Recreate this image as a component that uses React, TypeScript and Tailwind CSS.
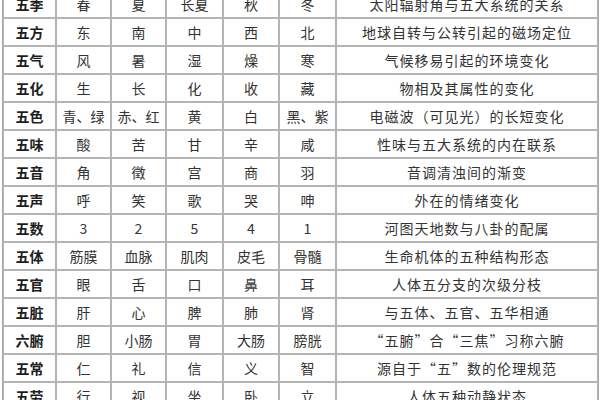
const rows: [string, string[], string][] = [
  ['五季', ['春', '夏', '长夏', '秋', '冬'], '太阳辐射角与五大系统的关系'],
  ['五方', ['东', '南', '中', '西', '北'], '地球自转与公转引起的磁场定位'],
  ['五气', ['风', '暑', '湿', '燥', '寒'], '气候移易引起的环境变化'],
  ['五化', ['生', '长', '化', '收', '藏'], '物相及其属性的变化'],
  ['五色', ['青、绿', '赤、红', '黄', '白', '黑、紫'], '电磁波（可见光）的长短变化'],
  ['五味', ['酸', '苦', '甘', '辛', '咸'], '性味与五大系统的内在联系'],
  ['五音', ['角', '徵', '宫', '商', '羽'], '音调清浊间的渐变'],
  ['五声', ['呼', '笑', '歌', '哭', '呻'], '外在的情绪变化'],
  ['五数', ['3', '2', '5', '4', '1'], '河图天地数与八卦的配属'],
  ['五体', ['筋膜', '血脉', '肌肉', '皮毛', '骨髓'], '生命机体的五种结构形态'],
  ['五官', ['眼', '舌', '口', '鼻', '耳'], '人体五分支的次级分枝'],
  ['五脏', ['肝', '心', '脾', '肺', '肾'], '与五体、五官、五华相通'],
  ['六腑', ['胆', '小肠', '胃', '大肠', '膀胱'], '“五腑”合“三焦”习称六腑'],
  ['五常', ['仁', '礼', '信', '义', '智'], '源自于“五”数的伦理规范'],
  ['五劳', ['行', '视', '坐', '卧', '立'], '人体五种动静状态'],
]

const colWidths = ['w-[53px]', 'w-[55px]', 'w-[55px]', 'w-[57px]', 'w-[56px]', 'w-[57px]', 'w-[262px]']

const App = () => {
  return (
    <div className="h-[400px] w-[600px] overflow-hidden bg-white">
      <table
        className="-mt-[11px] ml-[2px] w-[596px] table-fixed border-separate border-spacing-0 border border-[#a8a8a8] text-[14px] text-[#333333]"
        style={{ fontFamily: '"Noto Sans CJK SC", "Noto Sans", sans-serif' }}
      >
        <colgroup>
          {colWidths.map((w, i) => (
            <col key={i} className={w} />
          ))}
        </colgroup>
        <tbody>
          {rows.map(([name, items, desc]) => (
            <tr key={name} className="h-[28px]">
              <td className="border border-[#b4b4b4] p-0 text-center font-bold text-[#1e1e1e]">{name}</td>
              {items.map((it, i) => (
                <td key={i} className="border border-[#b4b4b4] p-0 text-center leading-none">
                  {it}
                </td>
              ))}
              <td className="border border-[#b4b4b4] p-0 text-center leading-none tracking-[1px]">{desc}</td>
            </tr>
          ))}
        </tbody>
      </table>
    </div>
  )
}

export default App
